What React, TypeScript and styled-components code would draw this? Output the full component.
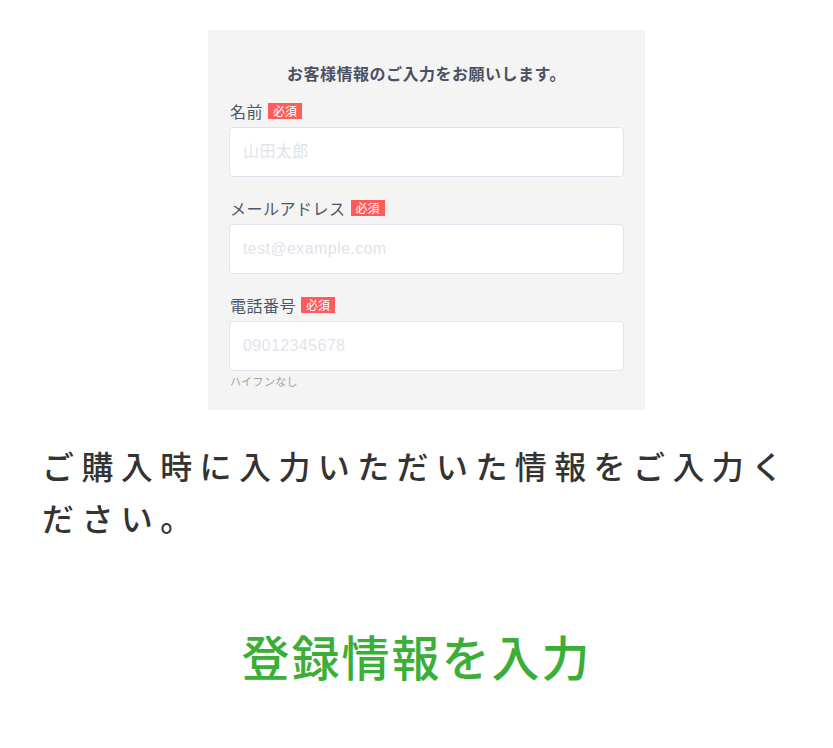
import styled, { createGlobalStyle } from "styled-components";

const GlobalStyle = createGlobalStyle`
  html, body {
    margin: 0;
    padding: 0;
    background: #ffffff;
  }
  body {
    font-family: "Noto Sans CJK JP", "Noto Sans", sans-serif;
  }
`;

interface Field {
  label: string;
  placeholder: string;
  hint?: string;
}

const fields: Field[] = [
  { label: "名前", placeholder: "山田太郎" },
  { label: "メールアドレス", placeholder: "test@example.com" },
  { label: "電話番号", placeholder: "09012345678", hint: "ハイフンなし" },
];

export default function App() {
  return (
    <>
      <GlobalStyle />
      <Page>
        <FormShot>
          <FormTitle>お客様情報のご入力をお願いします。</FormTitle>
          {fields.map((f) => (
            <FieldGroup key={f.label}>
              <LabelRow>
                <LabelText>{f.label}</LabelText>
                <Required>必須</Required>
              </LabelRow>
              <Input placeholder={f.placeholder} readOnly />
              {f.hint && <Hint>{f.hint}</Hint>}
            </FieldGroup>
          ))}
        </FormShot>
        <Description>ご購入時に入力いただいた情報をご入力ください。</Description>
        <StepTitle>登録情報を入力</StepTitle>
      </Page>
    </>
  );
}

const Page = styled.div`
  display: flex;
  flex-direction: column;
  padding-top: 30px;
  width: 833px;
  box-sizing: border-box;
`;

const FormShot = styled.div`
  display: flex;
  flex-direction: column;
  width: 437px;
  margin-left: 208px;
  padding: 31px 21px 22px;
  box-sizing: border-box;
  background: #f4f4f4;
`;

const FormTitle = styled.div`
  font-size: 16px;
  line-height: 24px;
  font-weight: 700;
  letter-spacing: 0.5px;
  color: #4a5163;
  text-align: center;
  margin-bottom: 16px;
`;

const FieldGroup = styled.div`
  display: flex;
  flex-direction: column;
  margin-bottom: 21px;

  &:last-child {
    margin-bottom: 0;
  }
`;

const LabelRow = styled.div`
  display: flex;
  align-items: center;
  gap: 5px;
  height: 20px;
  margin-bottom: 6px;
  padding-left: 1px;
`;

const LabelText = styled.span`
  font-size: 16px;
  line-height: 20px;
  letter-spacing: 0.5px;
  color: #4f5668;
`;

const Required = styled.span`
  display: inline-flex;
  align-items: center;
  height: 16px;
  padding: 0 5px;
  background: #ff5b5b;
  color: #ffffff;
  font-size: 12px;
  line-height: 16px;
`;

const Input = styled.input`
  height: 50px;
  width: 100%;
  box-sizing: border-box;
  border: 1px solid #e0e4ee;
  border-radius: 4px;
  background: #ffffff;
  padding: 0 13px;
  font-family: "Liberation Sans", "Noto Sans CJK JP", sans-serif;
  font-size: 16px;
  letter-spacing: 0.4px;
  color: #333;
  outline: none;

  &::placeholder {
    color: #e1e3eb;
  }
`;

const Hint = styled.div`
  margin-top: 3px;
  padding-left: 1px;
  font-size: 11px;
  line-height: 14px;
  letter-spacing: 0.3px;
  color: #a3a3a3;
`;

const Description = styled.p`
  margin: 29px 0 0;
  padding: 0 42px;
  font-size: 32px;
  line-height: 52px;
  font-weight: 500;
  letter-spacing: 7.4px;
  color: #333333;
`;

const StepTitle = styled.h2`
  margin: 82px 0 0;
  text-align: center;
  font-size: 48px;
  line-height: 60px;
  font-weight: 500;
  letter-spacing: 2px;
  color: #3aae36;
`;
